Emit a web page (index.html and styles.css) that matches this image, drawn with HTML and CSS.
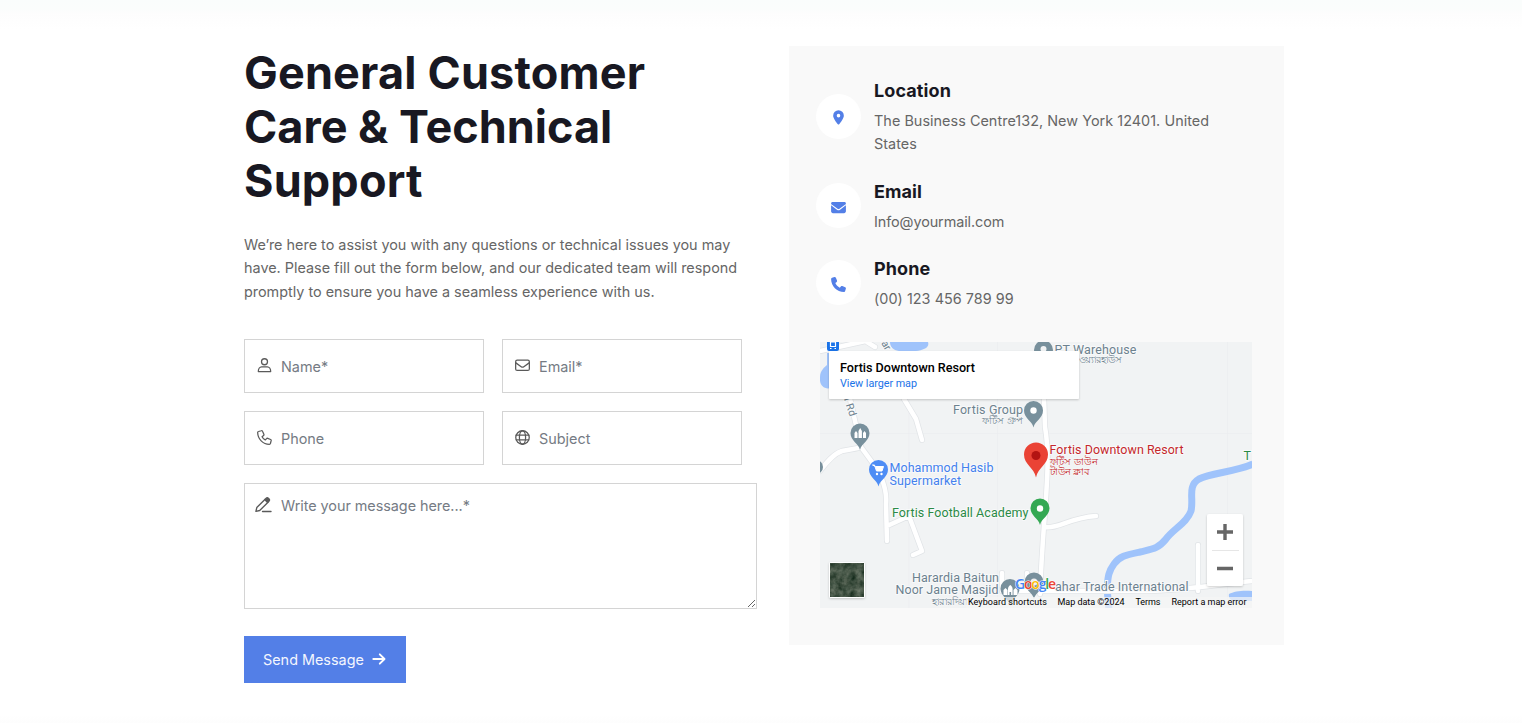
FILE: index.html
```html
<!DOCTYPE html>
<html lang="en">
<head>
<meta charset="utf-8">
<title>Contact</title>
<link rel="stylesheet" href="styles.css">
</head>
<body>
<main class="page">
  <section class="contact">
    <h1 class="title">General Customer<br><span class="tight">Care &amp; Technical</span><br>Support</h1>
    <p class="intro">We’re here to assist you with any questions or technical issues you may<br>have. Please fill out the form below, and our dedicated team will respond<br>promptly to ensure you have a seamless experience with us.</p>
    <form class="form">
      <div class="fields">
        <label class="field">
          <svg class="ico" viewBox="0 0 16 16"><circle cx="8" cy="4" r="3.2"/><path d="M4.900 9.500h6.200c1.900 0 3.500 2.100 3.500 5H1.400c0-2.900 1.600-5 3.500-5z"/></svg>
          <input class="input" type="text" placeholder="Name*">
        </label>
        <label class="field">
          <svg class="ico" viewBox="0 0 16 16"><rect x=".7" y="2.300" width="14.600" height="11" rx="1.600"/><path d="M.9 5.200l5.700 4.100c.8.600 2 .6 2.800 0l5.700-4.100"/></svg>
          <input class="input" type="text" placeholder="Email*">
        </label>
        <label class="field">
          <svg class="ico" viewBox="0 0 16 16"><path d="M4.600.8L1.600 1.600c-.6.100-.9.600-.9 1.100C.9 9.700 6.300 15.100 13.200 15.300c.5 0 1-.4 1.100-.9l.8-3c.1-.5-.1-1.100-.6-1.300l-3-1.200c-.5-.2-1-.1-1.300.3L8.800 10.600C7.400 9.900 6.100 8.600 5.400 7.200L7 5.900c.4-.3.500-.8.3-1.300l-1.300-3.100C5.800.9 5.200.6 4.600.8z"/></svg>
          <input class="input" type="text" placeholder="Phone">
        </label>
        <label class="field">
          <svg class="ico" viewBox="0 0 16 16"><circle cx="8" cy="8" r="7.200"/><ellipse cx="8" cy="8" rx="3.300" ry="7.200"/><path d="M1.300 5.500h13.400M1.300 10.500h13.400"/></svg>
          <input class="input" type="text" placeholder="Subject">
        </label>
      </div>
      <label class="field message">
        <svg class="ico pen" viewBox="0 0 17 16"><path d="M.9 14.400l.9-3.800L9.900 2.500l2.900 2.900-8.100 8.100z"/><path class="solid" d="M9.900 2.500l1.300-1.300c.6-.6 1.500-.6 2.100 0l.8.800c.6.600.6 1.500 0 2.100l-1.300 1.300z"/><path d="M7.500 14.500H16"/></svg>
        <textarea class="input area" placeholder="Write your message here...*"></textarea>
      </label>
      <button class="send" type="button">Send Message
        <svg class="arrow" viewBox="0 0 14 14"><path d="M1.300 7h11M7.800 2.300L12.500 7l-4.700 4.700"/></svg>
      </button>
    </form>
  </section>

  <aside class="card">
    <ul class="info">
      <li class="item">
        <span class="badge"><svg class="glyph" viewBox="0 0 16 16"><path fill-rule="evenodd" d="M8 .3a5.700 5.700 0 0 0-5.700 5.700c0 2.600 3.400 7.100 5 9.100.4.500 1 .5 1.400 0 1.600-2 5-6.500 5-9.100A5.700 5.700 0 0 0 8 .3zm0 7.600A1.900 1.900 0 1 1 8 4.100a1.900 1.900 0 0 1 0 3.800z"/></svg></span>
        <div class="copy"><h2 class="name">Location</h2><p class="detail">The Business Centre132, New York 12401. United<br>States</p></div>
      </li>
      <li class="item">
        <span class="badge"><svg class="glyph" viewBox="0 0 16 16"><path d="M1.600 2.100h12.800c.8 0 1.500.6 1.500 1.500 0 .5-.2.900-.6 1.200L8.600 9.600c-.4.200-.8.200-1.200 0L.7 4.800C.3 4.500.1 4.100.1 3.600c0-.9.700-1.500 1.500-1.500zM.1 5.700l6.600 4.900c.8.500 1.800.5 2.600 0l6.600-4.900v6.400c0 1.100-.9 1.900-2 1.900H2.100c-1.100 0-2-.8-2-1.900z"/></svg></span>
        <div class="copy"><h2 class="name">Email</h2><p class="detail mail">Info@yourmail.com</p></div>
      </li>
      <li class="item">
        <span class="badge"><svg class="glyph" viewBox="0 0 16 16"><path d="M5.200.9C5 .3 4.300 0 3.700.1L1.100.9C.5 1 .1 1.500.1 2.100c0 7.600 6.200 13.800 13.800 13.800.6 0 1.100-.4 1.200-1l.8-2.600c.1-.6-.1-1.200-.8-1.400l-3-1.300c-.5-.2-1.100-.1-1.400.3l-1.300 1.500C7.200 10.300 5.600 8.600 4.600 6.500l1.500-1.300c.4-.3.500-.9.300-1.400z"/></svg></span>
        <div class="copy"><h2 class="name">Phone</h2><p class="detail">(00) 123 456 789 99</p></div>
      </li>
    </ul>

    <svg class="map" viewBox="820 342 432 266">
      <defs>
        <g id="pin"><path d="M0 17C-1.500 10-9.500 8-9.500 0a9.500 9.500 0 0 1 19 0C9.500 8 1.500 10 0 17z"/></g>
        <filter id="lift" x="-10%" y="-20%" width="120%" height="150%"><feDropShadow dx="0" dy="1" stdDeviation="1.200" flood-opacity=".2"/></filter>
        <filter id="terrain" x="0" y="0" width="1" height="1" color-interpolation-filters="sRGB"><feTurbulence type="fractalNoise" baseFrequency=".16" numOctaves="3" seed="8"/><feColorMatrix values=".4 .15 0 0 -.02  .35 .15 0 0 .07  .35 .15 0 0 .01  0 0 0 0 1"/></filter>
      </defs>
      <rect x="820" y="342" width="432" height="266" fill="#f1f3f4"/>
      <path d="M820 433.500h432M909 342v266M997.500 342v266M1227.500 342v266" stroke="#ebedef" stroke-width=".7" fill="none"/>
      <g class="water">
        <path d="M890 342h38c2 6-5 8-12 9h-17c-6-1-9-4-9-9zM827 353h4v35c-7 2-12-3-11-11 0-7 5-10 7-12z"/>
        <path d="M1229 594c5-3 15-4 23-3v10h-16c-5 0-8-3-7-7z"/>
      </g>
      <path class="river" d="M1253 464c-18 8-42 9-54 15-12 7-5 20-8 32-4 12-18 18-25 28-8 10-14 10-26 13-14 3-20 4-26 12-6 8-6 14-7 24l2 22"/>
      <g class="road-edge">
        <path id="r1" d="M820 471c6-8 13-17 22-20 8-2 15-2 19-4M848 390l13 57 19 26c4 12 7 20 6 31l1 37M887 526l22-10 13 35-9 4M904 399l12 20 6 21M867 342l8 5M820 351l50-11"/>
        <path id="r2" d="M1042 342l3 85c7 40-2 84-5 167M1045 527c14 2 23-9 51-11M1002 573v14M1027 573v14M1198 545v46M1252 581c-30 3-66 9-104 10h-146"/>
      </g>
      <g class="road"><use href="#r1"/><use href="#r2"/></g>
      <text class="lbl small" x="843" y="396" transform="rotate(72 843 396)" textLength="22">a Rd</text>
      <text class="lbl small" x="881" y="343" transform="rotate(60 881 343)">ar</text>
      <rect x="827" y="338" width="12" height="13" rx="2" fill="#1a73e8"/>
      <path d="M830.500 342h5v4.500h-5zM830 348.500h1.500M834.500 348.500h1.500" fill="none" stroke="#fff" stroke-width="1.200"/>

      <g fill="#78909c">
        <use href="#pin" x="1043.500" y="350"/><use href="#pin" x="1033.500" y="410.500"/><use href="#pin" x="860" y="433"/>
        <use href="#pin" x="1010" y="588.500"/><use href="#pin" x="1034" y="582"/><circle cx="816" cy="467" r="7"/>
      </g>
      <circle cx="1043.500" cy="349" r="3" fill="#f1f3f4"/><circle cx="1033.500" cy="410.500" r="3.200" fill="#fff"/><circle cx="1034" cy="582" r="3.500" fill="#eee"/>
      <path d="M854.500 438v-5l1.500-2 1.500 2v5zM858.500 438v-7l1.700-3 1.700 3v7zM863 438v-5l1.500-2 1.500 2v5z" fill="#fff"/>
      <path d="M1003.500 595v-5l2-2 2 2v5zM1008 595v-6c0-2 1-3 2.300-4 1.300 1 2.300 2 2.300 4v6h-1.500v-3h-1.600v3zM1013.500 595v-5l2-2 2 2v5z" fill="#fff"/>
      <use href="#pin" x="878.500" y="469.500" fill="#4e8df5"/>
      <path d="M872.500 465h2l2 6h5.500l1.500-4.500h-8z" fill="#fff" stroke="#fff"/><circle cx="877" cy="474" r="1.200" fill="#fff"/><circle cx="881.500" cy="474" r="1.200" fill="#fff"/>
      <use href="#pin" x="1040" y="508" fill="#34a853"/><circle cx="1040" cy="508.500" r="3.200" fill="#fff"/>
      <path d="M1036 477.500c-2-10-12-13-12-23a12 12 0 0 1 24 0c0 10-10 13-12 23z" fill="#ea4335"/><circle cx="1036" cy="455.500" r="4.500" fill="#b31412"/>

      <g class="lbl">
        <text x="1054.500" y="353.500" textLength="82">PT Warehouse</text>
        <text class="bn" x="1079" y="363" textLength="43">ওয়্যারহাউস</text>
        <text x="953" y="414" textLength="70">Fortis Group</text>
        <text class="bn" x="982" y="423.500" textLength="41">ফর্টিস গ্রুপ</text>
        <text x="912" y="582" textLength="87">Harardia Baitun</text>
        <text x="895.500" y="594.400" textLength="103">Noor Jame Masjid</text>
        <text class="bn" x="931" y="605" textLength="36">হারারদিয়া</text>
        <text x="1055" y="591" textLength="133.500">ahar Trade International</text>
      </g>
      <g class="lbl blue">
        <text x="889.500" y="472.400" textLength="104">Mohammod Hasib</text>
        <text x="889.500" y="485" textLength="71.500">Supermarket</text>
      </g>
      <text class="lbl green" x="892" y="517" textLength="136.500">Fortis Football Academy</text>
      <text class="lbl green" x="1243.500" y="459.500">T</text>
      <g class="lbl red">
        <text x="1049.500" y="454.400" textLength="134">Fortis Downtown Resort</text>
        <text class="bn" x="1049.500" y="464.500" textLength="48">ফর্টিস ডাউন</text>
        <text class="bn" x="1049.500" y="474.500" textLength="40">টাউন ক্লাব</text>
      </g>

      <rect x="829" y="351" width="250" height="48" rx="1" fill="#fff" filter="url(#lift)"/>
      <text class="pop-title" x="840" y="372" textLength="135">Fortis Downtown Resort</text>
      <text class="pop-link" x="840" y="387" textLength="77">View larger map</text>

      <rect x="1207" y="514" width="36" height="72" rx="2" fill="#fff" filter="url(#lift)"/>
      <path d="M1212 550.500h27" stroke="#e6e6e6"/>
      <path d="M1217 532h16M1225 524v16M1217 568.500h16" stroke="#666" stroke-width="3.400"/>

      <g filter="url(#lift)"><rect x="829" y="562" width="36" height="36" rx="2" fill="#fff"/></g>
      <rect x="830" y="563" width="34" height="34" fill="#304b3d" filter="url(#terrain)"/>

      <rect x="966" y="597" width="286" height="11" fill="#f5f5f5" fill-opacity=".7"/>
      <text class="google" x="1015" y="589" textLength="41"><tspan fill="#4285f4">G</tspan><tspan fill="#ea4335">o</tspan><tspan fill="#fbbc04">o</tspan><tspan fill="#4285f4">g</tspan><tspan fill="#34a853">l</tspan><tspan fill="#ea4335">e</tspan></text>
      <g class="legal">
        <text x="968" y="605" textLength="79">Keyboard shortcuts</text>
        <text x="1057.500" y="605" textLength="67">Map data ©2024</text>
        <text x="1135.500" y="605" textLength="25">Terms</text>
        <text x="1171.500" y="605" textLength="75">Report a map error</text>
      </g>
    </svg>
  </aside>
</main>
</body>
</html>
```
FILE: styles.css
```css
* { box-sizing: border-box; }

body {
  margin: 0;
  height: 723px;
  overflow: hidden;
  font-family: Inter, "Liberation Sans", sans-serif;
  color: #666;
  background:
    linear-gradient(#fafdfc 0, #fbfdfc 9px, #fdfdfd 13px, #fff 30px, #fff 715px, #fdfdfd 723px);
}

.page {
  display: flex;
  align-items: flex-start;
  gap: 32px;
  width: 1040px;
  margin-left: 244px;
  padding-top: 46px;
}

.contact { width: 513px; }

.title {
  margin: 0 0 25px;
  font-size: 45px;
  line-height: 54px;
  font-weight: 700;
  letter-spacing: .17px;
  color: #181822;
  white-space: nowrap;
}

.tight { letter-spacing: 0; }

.intro {
  margin: 0 0 35.600px;
  font-size: 14.400px;
  line-height: 23.400px;
  white-space: nowrap;
}

.form { display: flex; flex-direction: column; align-items: flex-start; }

.fields {
  display: grid;
  grid-template-columns: 240px 240px;
  gap: 18px;
  margin-bottom: 18px;
}

.field {
  display: flex;
  align-items: center;
  gap: 9px;
  height: 54px;
  padding-left: 12px;
  border: 1px solid #d4d4d4;
  background: #fff;
}

.ico {
  flex: none;
  width: 15px;
  height: 15px;
  fill: none;
  stroke: #5a5a5a;
  stroke-width: 1.350;
  stroke-linejoin: round;
  stroke-linecap: round;
}

.solid { fill: #5a5a5a; }

.input {
  flex: 1;
  min-width: 0;
  padding: 2px 0 0;
  border: 0;
  outline: 0;
  background: none;
  font: 400 14.400px/24px Inter, "Liberation Sans", sans-serif;
}

.input::placeholder { color: #757b84; }

.message {
  align-items: flex-start;
  width: 513px;
  height: 126px;
  margin-bottom: 27px;
  padding-left: 10px;
}

.pen { width: 17px; height: 16px; margin-top: 13px; }

.area { height: 124px; padding-top: 10px; resize: vertical; letter-spacing: -.04px; }

.send {
  display: flex;
  align-items: center;
  gap: 8px;
  width: 162px;
  height: 47px;
  padding: 1px 0 0 19px;
  border: 0;
  background: #537fe7;
  color: #f3f6fe;
  font: 400 14.400px/24px Inter, "Liberation Sans", sans-serif;
  white-space: nowrap;
}

.arrow {
  width: 14px;
  height: 14px;
  margin-top: -2px;
  fill: none;
  stroke: #fff;
  stroke-width: 1.900;
  stroke-linecap: round;
  stroke-linejoin: round;
}

.card {
  width: 495px;
  height: 599px;
  padding: 32px 27px 0;
  background: #f9f9f9;
}

.info {
  display: flex;
  flex-direction: column;
  gap: 24px;
  height: 264px;
  margin: 0;
  padding: 0;
  list-style: none;
}

.item { display: flex; align-items: center; gap: 13px; }
.copy { padding-top: 1px; margin-bottom: -1px; }

.badge {
  display: grid;
  place-items: center;
  flex: none;
  width: 45px;
  height: 45px;
  padding: 3px 1px 0 0;
  border-radius: 50%;
  background: #fff;
}

.glyph { width: 15px; height: 15px; fill: #537fe7; }

.name {
  margin: 0 0 6px;
  font-size: 18px;
  line-height: 24px;
  font-weight: 650;
  letter-spacing: .1px;
  color: #181822;
}

.detail {
  margin: 0;
  font-size: 14.400px;
  line-height: 23.400px;
  letter-spacing: .04px;
  white-space: nowrap;
}

.mail { letter-spacing: -.08px; }

.map { display: block; width: 432px; height: 266px; margin: 0 0 0 4px; }

.water { fill: #9fc3fb; }
.river { fill: none; stroke: #9fc3fb; stroke-width: 7; }
.road-edge { fill: none; stroke: #e1e4e7; stroke-width: 6; stroke-linecap: round; stroke-linejoin: round; }
.road { fill: none; stroke: #fff; stroke-width: 4.500; stroke-linecap: round; stroke-linejoin: round; }

.lbl {
  font-family: Roboto, "Noto Sans", sans-serif;
  font-size: 12.500px;
  fill: #6c818e;
  stroke: #f8f9fa;
  stroke-width: 2;
  paint-order: stroke;
}
.small { font-size: 10.500px; }
.bn { font-size: 10px; stroke-width: 1; }
.blue { fill: #4481ee; }
.green { fill: #2b8a46; }
.red { fill: #c5282c; }

.pop-title { font: 500 12.600px Roboto, sans-serif; fill: #000; }
.pop-link { font: 400 10.800px Roboto, sans-serif; fill: #1a73e8; }
.legal { font: 400 9px Roboto, sans-serif; fill: #000; }
.google {
  font: 600 14px "Open Sans", sans-serif;
  stroke: #fff;
  stroke-width: 1;
  paint-order: stroke;
}
```
